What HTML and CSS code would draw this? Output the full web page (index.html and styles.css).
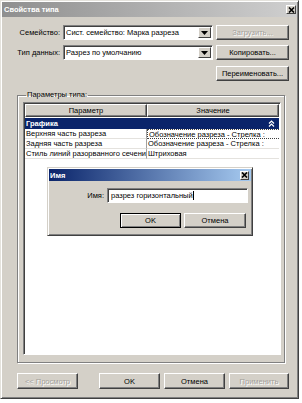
FILE: index.html
```html
<!DOCTYPE html>
<html>
<head>
<meta charset="utf-8">
<link rel="stylesheet" href="styles.css">
</head>
<body>
<div class="win">
  <div class="title">
    <span>Свойства типа</span>
    <span class="xbtn"><svg width="7" height="6" viewBox="0 0 7 6"><path d="M1 0.5L6 5.5M6 0.5L1 5.5" stroke="#000" stroke-width="1.6"/></svg></span>
  </div>
  <div class="row row1">
    <span class="lbl">Семейство:</span>
    <div class="select"><span class="val">Сист. семейство: Марка разреза</span><span class="dd"><svg width="7" height="4" viewBox="0 0 7 4"><path d="M0 0h7L3.5 4z" fill="#000"/></svg></span></div>
    <span class="btn disabled">Загрузить...</span>
  </div>
  <div class="row row2">
    <span class="lbl">Тип данных:</span>
    <div class="select"><span class="val">Разрез по умолчанию</span><span class="dd"><svg width="7" height="4" viewBox="0 0 7 4"><path d="M0 0h7L3.5 4z" fill="#000"/></svg></span></div>
    <span class="btn">Копировать...</span>
  </div>
  <div class="row row3">
    <span class="btn">Переименовать...</span>
  </div>
  <fieldset class="group">
    <legend>Параметры типа:</legend>
    <div class="table">
      <div class="thead">
        <span class="hcell c1">Параметр</span>
        <span class="hcell c2">Значение</span>
      </div>
      <div class="cat">
        <span>Графика</span>
        <svg width="7" height="7" viewBox="0 0 7 7"><path d="M1 3.5L3.5 1L6 3.5M1 6.5L3.5 4L6 6.5" stroke="#fff" fill="none" stroke-width="1.2"/></svg>
      </div>
      <div class="trow">
        <span class="cell c1">Верхняя часть разреза</span>
        <span class="cell c2 focus">Обозначение разреза - Стрелка :</span>
      </div>
      <div class="trow">
        <span class="cell c1">Задняя часть разреза</span>
        <span class="cell c2">Обозначение разреза - Стрелка :</span>
      </div>
      <div class="trow">
        <span class="cell c1">Стиль линий разорванного сечени</span>
        <span class="cell c2">Штриховая</span>
      </div>
    </div>
  </fieldset>
  <div class="footer">
    <span class="btn b-prev disabled">&lt;&lt; Просмотр</span>
    <span class="btn b-ok">OK</span>
    <span class="btn b-cancel">Отмена</span>
    <span class="btn b-apply disabled">Применить</span>
  </div>
</div>

<div class="modal">
  <div class="mtitle">
    <span>Имя</span>
    <span class="xbtn mx"><svg width="7" height="6" viewBox="0 0 7 6"><path d="M1 0.5L6 5.5M6 0.5L1 5.5" stroke="#000" stroke-width="1.6"/></svg></span>
  </div>
  <div class="mrow">
    <span class="mlbl">Имя:</span>
    <div class="input"><span>разрез горизонтальный</span><span class="caret"></span></div>
  </div>
  <div class="mbtns">
    <span class="btn def">OK</span>
    <span class="btn mcancel">Отмена</span>
  </div>
</div>
</body>
</html>
```

FILE: styles.css
```css
* { box-sizing: border-box; }
html, body { margin: 0; padding: 0; background: #fff; }
body {
  font-family: "Liberation Sans", Arial, sans-serif;
  font-size: 7.5px;
  color: #000;
  position: relative;
  width: 302px;
  height: 403px;
  overflow: hidden;
}
.win {
  width: 299px;
  height: 399px;
  background: #d4d0c8;
  border: 1px solid;
  border-color: #e4e2dc #404040 #404040 #e4e2dc;
  box-shadow: inset 1px 1px 0 #fff, inset -1px -1px 0 #808080;
  padding: 1px;
  display: flex;
  flex-direction: column;
}
.title {
  height: 15px;
  background: linear-gradient(to right, #8f8f8f, #cfcfcf);
  color: #fff;
  font-weight: bold;
  display: flex;
  align-items: center;
  justify-content: space-between;
  padding: 0 1px 0 2px;
}
.xbtn {
  width: 10px;
  height: 9px;
  background: #d4d0c8;
  border: 1px solid;
  border-color: #fff #404040 #404040 #fff;
  display: flex;
  align-items: center;
  justify-content: center;
}
.row { display: flex; align-items: center; height: 15px; }
.row1 { margin-top: 8px; }
.row2 { margin-top: 5px; }
.row3 { margin-top: 6px; justify-content: flex-end; padding-right: 8px; }
.lbl { width: 58px; text-align: right; }
.select {
  width: 150px;
  height: 15px;
  margin-left: 3px;
  background: #fff;
  border: 1px solid;
  border-color: #808080 #fff #fff #808080;
  box-shadow: inset 1px 1px 0 #404040;
  display: flex;
  align-items: center;
  padding: 1px 1px 1px 2px;
}
.select .val { flex: 1; white-space: nowrap; overflow: hidden; }
.dd {
  width: 13px;
  height: 11px;
  background: #d4d0c8;
  border: 1px solid;
  border-color: #fff #404040 #404040 #fff;
  display: flex;
  align-items: center;
  justify-content: center;
}
.btn {
  height: 15px;
  background: #d4d0c8;
  border: 1px solid;
  border-color: #fff #404040 #404040 #fff;
  box-shadow: inset -1px -1px 0 #808080;
  display: flex;
  align-items: center;
  justify-content: center;
  white-space: nowrap;
}
.row .btn { width: 73px; margin-left: 3px; }
.disabled { color: #a3a19c; text-shadow: 1px 1px 0 #fff; }

.group {
  margin: 9px 12px 0 15px;
  padding: 2px 3px 7px 5px;
  border: 1px solid #808080;
  box-shadow: inset 1px 1px 0 #fff, 1px 1px 0 #fff;
  min-width: 0;
}
.group legend {
  padding: 0 1px;
  margin-left: 3px;
  line-height: 10px;
}
.table {
  height: 253px;
  background: #fff;
  border: 1px solid;
  border-color: #808080 #fff #fff #808080;
  box-shadow: inset 1px 1px 0 #404040;
  padding: 1px 1px 0 1px;
  display: flex;
  flex-direction: column;
}
.thead { display: flex; height: 13px; }
.hcell {
  background: #d4d0c8;
  border: 1px solid;
  border-color: #fff #404040 #404040 #fff;
  box-shadow: inset -1px -1px 0 #808080;
  display: flex;
  align-items: center;
  justify-content: center;
}
.thead .c1 { width: 122px; }
.thead .c2 { flex: 1; }
.cat {
  margin-top: 1px;
  height: 11px;
  background: #0a246a;
  color: #fff;
  font-weight: bold;
  display: flex;
  align-items: center;
  justify-content: space-between;
  padding: 0 4px 0 1px;
}
.trow { display: flex; height: 10px; }
.cell {
  display: flex;
  align-items: center;
  white-space: nowrap;
  overflow: hidden;
  padding-left: 1px;
  border-bottom: 1px solid #e4e2de;
}
.trow .c1 { width: 122px; border-right: 1px solid #a0a0a0; }
.trow .c2 { flex: 1; }
.trow .focus { border: 1px dotted #404040; border-right: none; }

.footer {
  display: flex;
  margin-top: 10px;
  padding-left: 15px;
  column-gap: 4px;
}
.footer .btn { height: 16px; }
.b-prev { width: 61px; }
.b-ok { width: 61px; margin-left: 17px; }
.b-cancel { width: 61px; }
.b-apply { width: 60px; }

.modal {
  position: absolute;
  left: 47px;
  top: 167px;
  width: 206px;
  height: 69px;
  background: #d4d0c8;
  border: 1px solid;
  border-color: #d4d0c8 #404040 #404040 #d4d0c8;
  box-shadow: inset 1px 1px 0 #fff, inset -1px -1px 0 #808080;
  padding: 1px;
}
.mtitle {
  height: 12px;
  background: linear-gradient(to right, #0a246a, #a6caf0);
  color: #fff;
  font-weight: bold;
  display: flex;
  align-items: center;
  justify-content: space-between;
  padding: 0 2px 0 1px;
}
.mx { width: 9px; height: 9px; }
.mrow { display: flex; align-items: center; margin-top: 7px; }
.mlbl { width: 55px; text-align: right; }
.input {
  width: 141px;
  height: 15px;
  margin-left: 3px;
  background: #fff;
  border: 1px solid;
  border-color: #808080 #fff #fff #808080;
  box-shadow: inset 1px 1px 0 #404040;
  display: flex;
  align-items: center;
  padding-left: 3px;
}
.caret { width: 1px; height: 9px; background: #000; }
.mbtns {
  display: flex;
  justify-content: flex-end;
  column-gap: 3px;
  padding-right: 5px;
  margin-top: 10px;
}
.mbtns .btn { width: 61px; }
.mbtns .mcancel { width: 62px; }
.def { border-color: #000; box-shadow: inset 1px 1px 0 #fff, inset -1px -1px 0 #808080; }
```
